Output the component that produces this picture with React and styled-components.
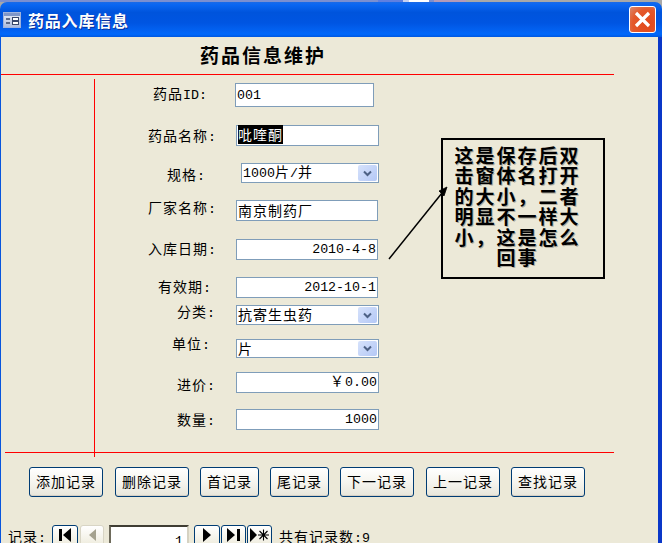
import React from 'react';
import styled, { createGlobalStyle } from 'styled-components';

const GlobalStyle = createGlobalStyle`
  html, body {
    margin: 0;
    padding: 0;
    background: #a8a8a8;
  }
`;

const Screen = styled.div`
  position: relative;
  width: 662px;
  height: 543px;
  overflow: hidden;
  font-family: "Noto Sans CJK SC", "Liberation Sans", sans-serif;
  font-size: 14px;
  letter-spacing: 1px;
  color: #000;
`;

const DesktopStrip = styled.div`
  display: flex;
  height: 2px;
  padding-left: 378px;
  background: #7b8fd0;
`;

const DesktopPatch = styled.span`
  flex: ${(p) => (p.$w ? `0 0 ${p.$w}px` : '1')};
  background: ${(p) => p.$c};
`;

const Window = styled.div`
  display: flex;
  flex-direction: column;
  height: 541px;
  width: 662px;
  border-radius: 7px 7px 0 0;
  overflow: hidden;
`;

const TitleBar = styled.div`
  display: flex;
  align-items: center;
  flex: 0 0 35px;
  padding: 0 6px 0 3px;
  background: linear-gradient(180deg, #1a6ae8 0%, #0a66f2 8%, #0054dc 30%, #0055e2 60%, #0364f4 85%, #0068fb 92%, #0058e0 100%);
  color: #fff;
`;

const TitleText = styled.div`
  flex: 1;
  margin-left: 7px;
  font-size: 16px;
  font-weight: 700;
  letter-spacing: 0.8px;
  line-height: 20px;
  text-shadow: 1px 1px 0 #0a2f9c;
`;

const CloseButton = styled.div`
  box-sizing: border-box;
  display: flex;
  align-items: center;
  justify-content: center;
  width: 27px;
  height: 27px;
  border: 1px solid #fff;
  border-radius: 3px;
  background: radial-gradient(circle at 70% 70%, #e2481c 0%, #e4582a 60%, #d98a70 100%);
`;

const Body = styled.div`
  flex: 1;
  position: relative;
  background: #ece9d8;
  border-left: 1px solid #0855dd;
  border-right: 4px solid #0a37c8;
`;

const Heading = styled.div`
  height: 37px;
  padding-left: 199px;
  font-size: 19px;
  font-weight: 700;
  letter-spacing: 2px;
  line-height: 36px;
`;

const RedRule = styled.div`
  height: 1px;
  background: #f00;
  width: ${(p) => p.$w}px;
  margin-left: ${(p) => p.$x}px;
`;

const MainArea = styled.div`
  display: flex;
  margin-top: 4px;
  height: 378px;
`;

const FieldColumn = styled.div`
  margin-left: 93px;
  width: 290px;
  border-left: 1px solid #f00;
`;

const Row = styled.div`
  display: flex;
  align-items: flex-start;
  height: ${(p) => p.$h}px;
  margin-top: ${(p) => p.$gap}px;
`;

const Label = styled.div`
  flex: 0 0 auto;
  box-sizing: border-box;
  width: ${(p) => p.$slot}px;
  padding-left: ${(p) => p.$x}px;
  margin-top: ${(p) => p.$dy}px;
  line-height: 20px;
  white-space: nowrap;
`;

const Latin = styled.span`
  font-family: "Liberation Mono", monospace;
  font-size: 13.3px;
  letter-spacing: 0;
`;

const Field = styled.div`
  box-sizing: border-box;
  display: flex;
  align-items: center;
  width: ${(p) => p.$w}px;
  height: 100%;
  padding: 0 1px;
  background: #fff;
  border: 1px solid #7f9db9;
  line-height: 18px;
  white-space: nowrap;
`;

const FieldText = styled.span`
  flex: 1;
  padding-bottom: 2px;
  text-align: ${(p) => (p.$right ? 'right' : 'left')};
`;

const Selected = styled.span`
  display: inline-block;
  line-height: 19px;
  background: #000;
  color: #fff;
`;

const DropButton = styled.span`
  box-sizing: border-box;
  display: flex;
  align-items: center;
  justify-content: center;
  flex: 0 0 19px;
  height: calc(100% - 2px);
  border-radius: 2px;
  background: linear-gradient(135deg, #d6e2fb, #b4c8f6);
  color: #4d6185;
`;

const Callout = styled.div`
  box-sizing: border-box;
  width: 164px;
  height: 141px;
  margin: 59px 0 0 56px;
  padding: 5px 20px 0 9px;
  border: 2px solid #000;
  font-size: 19px;
  font-weight: 700;
  line-height: 20.4px;
  letter-spacing: 2px;
  text-align: center;
  text-shadow: 1px 1px 0 #b0ad9f;
`;

const Arrow = styled.svg`
  position: absolute;
  left: 380px;
  top: 140px;
`;

const BottomRule = styled(RedRule)`
  position: relative;
  margin-top: -5px;
`;

const ButtonRow = styled.div`
  display: flex;
  margin: 14px 0 0 28px;
`;

const CommandButton = styled.div`
  box-sizing: border-box;
  display: flex;
  align-items: center;
  justify-content: center;
  width: ${(p) => p.$w}px;
  height: 30px;
  padding-bottom: 2px;
  margin-right: ${(p) => p.$gap}px;
  border: 1px solid #003c74;
  border-radius: 3px;
  background: linear-gradient(180deg, #ffffff 0%, #f6f5ef 50%, #e8e6da 100%);
  box-shadow: inset 0 -1px 0 #d6d0c5;
`;

const NavBar = styled.div`
  display: flex;
  align-items: flex-start;
  margin: 28px 0 0 7px;
`;

const NavLabel = styled.div`
  width: 44px;
  line-height: 20px;
  margin-top: 1px;
  white-space: nowrap;
`;

const NavButton = styled.div`
  box-sizing: border-box;
  display: flex;
  align-items: flex-start;
  justify-content: center;
  width: ${(p) => p.$w}px;
  height: 24px;
  padding-top: 2px;
  margin-right: ${(p) => p.$gap}px;
  border: 1px solid ${(p) => (p.$off ? '#d8d5c5' : '#003c74')};
  border-radius: 3px;
  background: linear-gradient(180deg, #fff, #ece9d8);
  color: ${(p) => (p.$off ? '#a5a28f' : '#000')};
`;

const NavInput = styled.div`
  box-sizing: border-box;
  width: 80px;
  height: 26px;
  margin: 0 5px;
  padding: 2px 4px 0 0;
  text-align: right;
  background: #fff;
  border: 2px solid #d6d2c2;
  border-top-color: #3f3d33;
  border-left-color: #6e6b5c;
`;

const NavCount = styled.div`
  margin: 1px 0 0 7px;
  line-height: 20px;
  white-space: nowrap;
`;

const Chevron = () => (
  <svg width="9" height="7" viewBox="0 0 9 7">
    <path d="M1 1.5 L4.5 5 L8 1.5" fill="none" stroke="currentColor" strokeWidth="2" />
  </svg>
);

const NavGlyph = ({ kind }) => (
  <svg width="22" height="14" viewBox="0 0 22 14" fill="currentColor">
    {kind === 'first' && <path d="M5 1h3v12H5zM17 0v14L9 7z" />}
    {kind === 'prev' && <path d="M15 1v12L8 7z" />}
    {kind === 'next' && <path d="M7 0v14l8-7z" />}
    {kind === 'last' && <path d="M4 0v14l8-7zM14 1h3v12h-3z" />}
    {kind === 'new' && (
      <>
        <path d="M1 0v14l7-7z" />
        <path d="M14.5 1.5v11M9 7h11M10.5 3l8 8M18.5 3l-8 8" stroke="currentColor" strokeWidth="1.1" fill="none" />
      </>
    )}
  </svg>
);

const fields = [
  { gap: 4, h: 24, slot: 140, x: 58, dy: 0, w: 139, label: <>药品<Latin>ID:</Latin></>, value: <Latin>001</Latin> },
  { gap: 18, h: 21, slot: 141, x: 53, dy: 0, w: 143, label: <>药品名称<Latin>:</Latin></>, value: <Selected>吡喹酮</Selected> },
  { gap: 17, h: 20, slot: 146, x: 72, dy: 1, w: 138, label: <>规格<Latin>:</Latin></>, value: <><Latin>1000</Latin>片<Latin>/</Latin>并</>, drop: true },
  { gap: 17, h: 21, slot: 141, x: 53, dy: -3, w: 142, label: <>厂家名称<Latin>:</Latin></>, value: '南京制药厂' },
  { gap: 18, h: 21, slot: 141, x: 53, dy: -1, w: 142, label: <>入库日期<Latin>:</Latin></>, value: <Latin>2010-4-8</Latin>, right: true },
  { gap: 17, h: 21, slot: 141, x: 63, dy: -1, w: 142, label: <>有效期<Latin>:</Latin></>, value: <Latin>2012-10-1</Latin>, right: true },
  { gap: 7, h: 20, slot: 141, x: 82, dy: -4, w: 143, label: <>分类<Latin>:</Latin></>, value: '抗寄生虫药', drop: true },
  { gap: 14, h: 19, slot: 141, x: 77, dy: -6, w: 143, label: <>单位<Latin>:</Latin></>, value: '片', drop: true },
  { gap: 14, h: 21, slot: 141, x: 82, dy: 2, w: 143, label: <>进价<Latin>:</Latin></>, value: <>{'\uFFE5'}<Latin>0.00</Latin></>, right: true },
  { gap: 16, h: 21, slot: 141, x: 82, dy: 0, w: 143, label: <>数量<Latin>:</Latin></>, value: <Latin>1000</Latin>, right: true },
];

const commands = [
  { text: '添加记录', w: 74, gap: 12 },
  { text: '删除记录', w: 74, gap: 11 },
  { text: '首记录', w: 59, gap: 11 },
  { text: '尾记录', w: 59, gap: 11 },
  { text: '下一记录', w: 74, gap: 12 },
  { text: '上一记录', w: 74, gap: 11 },
  { text: '查找记录', w: 74, gap: 0 },
];

const calloutText = '这是保存后双击窗体名打开的大小\uFF0C二者明显不一样大小\uFF0C这是怎么回事';

const App = () => (
  <>
    <GlobalStyle />
    <Screen>
      <DesktopStrip>
        <DesktopPatch $w={25} $c="#5f7fe0" />
        <DesktopPatch $w={6} $c="#c8d0f0" />
        <DesktopPatch $w={20} $c="#ffffff" />
        <DesktopPatch $w={5} $c="#7b8fd0" />
        <DesktopPatch $w={32} $c="#b49ab8" />
        <DesktopPatch $c="#a8a8a8" />
      </DesktopStrip>
      <Window>
        <TitleBar>
          <svg width="18" height="16" viewBox="0 0 18 16">
            <defs>
              <linearGradient id="formIcon" x1="0" y1="0" x2="0" y2="1">
                <stop offset="0" stopColor="#eef1f8" />
                <stop offset="1" stopColor="#a9b9dc" />
              </linearGradient>
            </defs>
            <rect x="0.5" y="0.5" width="17" height="15" fill="url(#formIcon)" stroke="#9fb2dc" />
            <rect x="1" y="1" width="16" height="3" fill="#7f96c8" />
            <path d="M3 7h4M3 11h4" stroke="#39486b" strokeWidth="1.6" />
            <rect x="9.5" y="5.5" width="6" height="3" fill="#fff" stroke="#39486b" />
            <rect x="9.5" y="9.5" width="6" height="3" fill="#fff" stroke="#39486b" />
          </svg>
          <TitleText>药品入库信息</TitleText>
          <CloseButton>
            <svg width="19" height="19" viewBox="0 0 19 19">
              <path d="M3 3 L16 16 M16 3 L3 16" stroke="#fff" strokeWidth="3.2" />
            </svg>
          </CloseButton>
        </TitleBar>
        <Body>
          <Heading>药品信息维护</Heading>
          <RedRule $x={0} $w={613} />
          <MainArea>
            <FieldColumn>
              {fields.map((f, i) => (
                <Row key={i} $gap={f.gap} $h={f.h}>
                  <Label $slot={f.slot} $x={f.x} $dy={f.dy}>{f.label}</Label>
                  <Field $w={f.w}>
                    <FieldText $right={f.right}>{f.value}</FieldText>
                    {f.drop && <DropButton><Chevron /></DropButton>}
                  </Field>
                </Row>
              ))}
            </FieldColumn>
            <Callout>{calloutText}</Callout>
          </MainArea>
          <Arrow width="70" height="90" viewBox="0 0 70 90">
            <path d="M8 82 L61 16" stroke="#000" strokeWidth="1.5" fill="none" />
            <path d="M66 10 L58 14 L63 19 Z" fill="#000" stroke="#000" strokeWidth="0.8" />
          </Arrow>
          <BottomRule $x={4} $w={609} />
          <ButtonRow>
            {commands.map((c) => (
              <CommandButton key={c.text} $w={c.w} $gap={c.gap}>{c.text}</CommandButton>
            ))}
          </ButtonRow>
          <NavBar>
            <NavLabel>记录<Latin>:</Latin></NavLabel>
            <NavButton $w={26} $gap={2}><NavGlyph kind="first" /></NavButton>
            <NavButton $w={24} $gap={0} $off><NavGlyph kind="prev" /></NavButton>
            <NavInput><Latin>1</Latin></NavInput>
            <NavButton $w={26} $gap={1}><NavGlyph kind="next" /></NavButton>
            <NavButton $w={25} $gap={1}><NavGlyph kind="last" /></NavButton>
            <NavButton $w={25} $gap={0}><NavGlyph kind="new" /></NavButton>
            <NavCount>共有记录数<Latin>:9</Latin></NavCount>
          </NavBar>
        </Body>
      </Window>
    </Screen>
  </>
);

export default App;
